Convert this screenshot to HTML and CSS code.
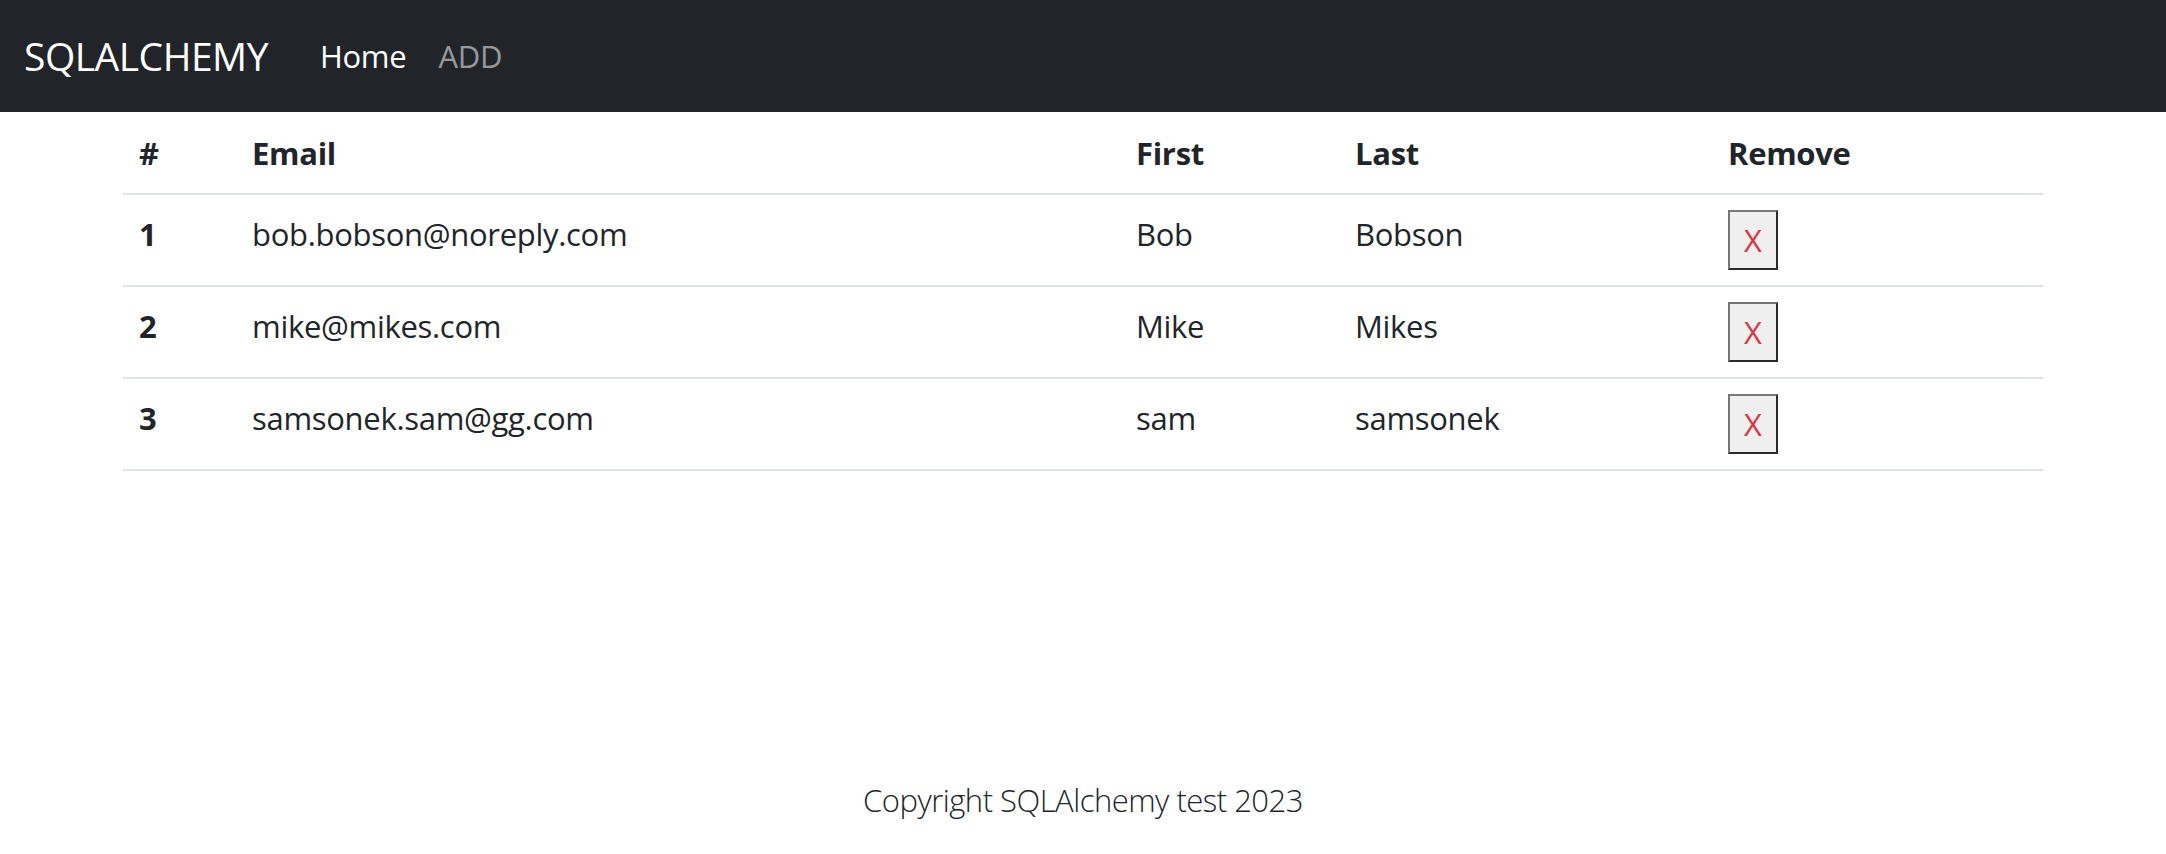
FILE: index.html
```html
<!DOCTYPE html>
<html lang="en">
<head>
<meta charset="utf-8">
<title>SQLAlchemy test</title>
<link rel="stylesheet" href="styles.css">
</head>
<body>
<nav class="navbar">
  <a class="brand" href="#">SQLALCHEMY</a>
  <a class="nav-link active" href="#">Home</a>
  <a class="nav-link" href="#">ADD</a>
</nav>
<main class="container">
  <table class="table">
    <thead>
      <tr>
        <th class="c-num">#</th>
        <th class="c-email">Email</th>
        <th class="c-first">First</th>
        <th class="c-last">Last</th>
        <th class="c-remove">Remove</th>
      </tr>
    </thead>
    <tbody>
      <tr>
        <th>1</th>
        <td>bob.bobson@noreply.com</td>
        <td>Bob</td>
        <td>Bobson</td>
        <td><button class="remove-btn" type="button">X</button></td>
      </tr>
      <tr>
        <th>2</th>
        <td>mike@mikes.com</td>
        <td>Mike</td>
        <td>Mikes</td>
        <td><button class="remove-btn" type="button">X</button></td>
      </tr>
      <tr>
        <th>3</th>
        <td>samsonek.sam@gg.com</td>
        <td>sam</td>
        <td>samsonek</td>
        <td><button class="remove-btn" type="button">X</button></td>
      </tr>
    </tbody>
  </table>
</main>
<footer class="footer">Copyright SQLAlchemy test 2023</footer>
</body>
</html>
```
FILE: styles.css
```css
* { box-sizing: border-box; }
html, body { margin: 0; padding: 0; }
body {
  font-family: "Open Sans", "Noto Sans", "Liberation Sans", sans-serif;
  font-size: 31px;
  letter-spacing: -0.3px;
  line-height: 48px;
  color: #212529;
  background: #fff;
  min-height: 100vh;
  display: flex;
  flex-direction: column;
}
a { text-decoration: none; }

.navbar {
  height: 112px;
  background: #212529;
  display: flex;
  align-items: center;
  padding: 0 24px;
}
.brand {
  color: #fff;
  font-size: 39px;
  letter-spacing: -0.5px;
  line-height: 60px;
  margin-right: 36px;
}
.nav-link {
  color: rgba(255, 255, 255, 0.55);
  font-size: 31px;
  padding: 0 16px;
}
.nav-link.active { color: #fff; }

.container {
  width: 1920px;
  margin: 0 auto;
}
.table {
  width: 100%;
  border-collapse: collapse;
}
.table th, .table td {
  text-align: left;
  vertical-align: top;
  padding: 15px 16px;
  border-bottom: 2px solid #dee2e6;
  font-weight: 400;
}
.table th { font-weight: 700; }
.table thead th { padding: 17px 16px 16px; }
.c-num { width: 113px; }
.c-email { width: 884px; }
.c-first { width: 219px; }
.c-last { width: 373px; }
.c-remove { width: 331px; }

.remove-btn {
  display: block;
  width: 50px;
  height: 60px;
  padding: 0;
  background: #efefef;
  border: 2px solid;
  border-color: #767676 #2b2b2b #2b2b2b #767676;
  color: #dc3545;
  font-family: inherit;
  font-size: 31px;
  line-height: 56px;
  text-align: center;
}

.footer {
  margin-top: auto;
  text-align: center;
  font-weight: 300;
  letter-spacing: -0.5px;
  padding-bottom: 30px;
}
```
